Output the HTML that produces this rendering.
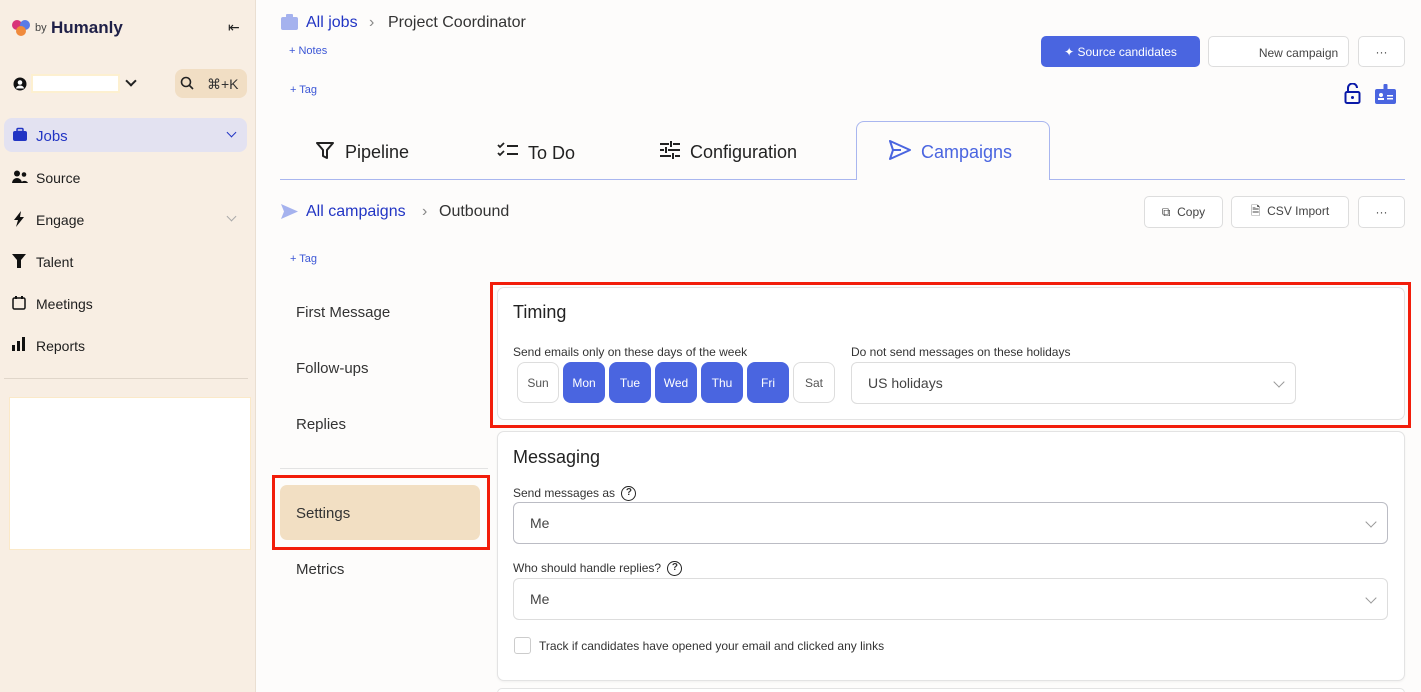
<!DOCTYPE html>
<html><head><meta charset="utf-8"><style>
*{box-sizing:border-box;margin:0;padding:0}
html,body{width:1421px;height:692px;overflow:hidden}
body{background:#fdfcfb;font-family:"Liberation Sans",sans-serif;color:#222;position:relative}
.a{position:absolute;white-space:nowrap}
.side{position:absolute;left:0;top:0;width:256px;height:692px;background:#f8eee3;border-right:1px solid #eadfd2}
.nav{position:absolute;left:36px;font-size:14px;color:#1e1e1e}
.btn{position:absolute;border:1px solid #ddd;border-radius:5px;background:#fff;font-size:12px;color:#444;display:flex;align-items:center;justify-content:center}
.blue{color:#2235c4}
.day{position:absolute;top:362px;width:42px;height:41px;border-radius:8px;font-size:12px;display:flex;align-items:center;justify-content:center}
.on{background:#4a65e0;color:#fff}
.off{background:#fff;border:1px solid #ddd;color:#555}
.sel{position:absolute;background:#fff;border:1px solid #ddd;border-radius:6px;font-size:14px;color:#444;padding-left:16px;display:flex;align-items:center}
.chev{position:absolute;right:12px;top:50%;margin-top:-5px;width:8px;height:8px;border-right:1.3px solid #999;border-bottom:1.3px solid #999;transform:rotate(45deg)}
.menu{position:absolute;left:296px;font-size:15px;color:#333}
</style></head><body>
<div class="side">
  <svg class="a" style="left:11px;top:19px" width="20" height="18"><circle cx="6" cy="6" r="5" fill="#d8347a"/><circle cx="14" cy="6" r="5" fill="#5b7be8"/><circle cx="10" cy="12" r="5" fill="#f08a3c"/></svg>
  <div class="a" style="left:35px;top:22px;font-size:11px;color:#444">by</div>
  <div class="a" style="left:51px;top:18px;font-size:17px;font-weight:bold;color:#1f2048">Humanly</div>
  <div class="a" style="left:228px;top:19px;font-size:14px;color:#222">⇤</div>
  <svg class="a" style="left:13px;top:77px" width="14" height="14"><circle cx="7" cy="7" r="6.5" fill="#111"/><circle cx="7" cy="5.5" r="2.3" fill="#fff"/><path d="M3 11.5a4 3 0 0 1 8 0" fill="#fff"/></svg>
  <div class="a" style="left:31px;top:74px;width:89px;height:19px;background:#fff;border:2px solid #fdf0d0"></div>
  <div class="a" style="left:127px;top:77px;width:8px;height:8px;border-right:2px solid #222;border-bottom:2px solid #222;transform:rotate(45deg)"></div>
  <div class="a" style="left:175px;top:69px;width:72px;height:29px;background:#f1dec4;border-radius:8px"></div>
  <svg class="a" style="left:180px;top:76px" width="14" height="14"><circle cx="6" cy="6" r="4.5" fill="none" stroke="#222" stroke-width="1.6"/><path d="M9.5 9.5L13 13" stroke="#222" stroke-width="1.6"/></svg>
  <div class="a" style="left:207px;top:76px;font-size:14px;color:#333">⌘+K</div>
  <div class="a" style="left:4px;top:118px;width:243px;height:34px;background:#e3e2f1;border-radius:8px"></div>
  <svg class="a" style="left:12px;top:127px" width="16" height="16"><rect x="1" y="4" width="14" height="10" rx="2" fill="#2235c4"/><rect x="5" y="1.5" width="6" height="3" rx="1" fill="none" stroke="#2235c4" stroke-width="1.5"/></svg>
  <div class="nav blue" style="top:128px;font-size:15px">Jobs</div>
  <div class="a" style="left:228px;top:129px;width:7px;height:7px;border-right:1.3px solid #2235c4;border-bottom:1.3px solid #2235c4;transform:rotate(45deg)"></div>
  <svg class="a" style="left:12px;top:170px" width="16" height="14"><circle cx="5" cy="3.5" r="3" fill="#111"/><circle cx="12" cy="4.5" r="2.3" fill="#111"/><path d="M0 13a5 5 0 0 1 10 0z M9 13a4 4 0 0 1 7 0z" fill="#111"/></svg><div class="nav" style="top:170px">Source</div>
  <svg class="a" style="left:13px;top:211px" width="12" height="16"><path d="M8 0L1 9h4l-2 7 8-10H7z" fill="#111"/></svg><div class="nav" style="top:212px">Engage</div>
  <div class="a" style="left:228px;top:213px;width:7px;height:7px;border-right:1px solid #aaa;border-bottom:1px solid #aaa;transform:rotate(45deg)"></div>
  <svg class="a" style="left:12px;top:254px" width="14" height="14"><path d="M0 0h14l-5 6v8h-4v-8z" fill="#111"/></svg><div class="nav" style="top:254px">Talent</div>
  <svg class="a" style="left:12px;top:296px" width="14" height="14"><rect x="1" y="2" width="12" height="11" rx="1.5" fill="none" stroke="#111" stroke-width="1.5"/><rect x="3" y="0" width="2" height="3" fill="#111"/><rect x="9" y="0" width="2" height="3" fill="#111"/></svg><div class="nav" style="top:296px">Meetings</div>
  <svg class="a" style="left:12px;top:337px" width="14" height="14"><rect x="0" y="8" width="3" height="6" fill="#111"/><rect x="5" y="4" width="3" height="10" fill="#111"/><rect x="10" y="0" width="3" height="14" fill="#111"/></svg><div class="nav" style="top:338px">Reports</div>
  <div class="a" style="left:4px;top:378px;width:244px;height:1px;background:#e0d6ca"></div>
  <div class="a" style="left:9px;top:397px;width:242px;height:153px;background:#fff;border:1px solid #fbe9c8"></div>
</div>

<svg class="a" style="left:281px;top:14px" width="17" height="16"><rect x="0" y="3" width="17" height="13" rx="2" fill="#a5b2ee"/><rect x="5" y="0" width="7" height="4" rx="1" fill="#a5b2ee"/></svg>
<div class="a blue" style="left:306px;top:14px;font-size:16px">All jobs</div>
<div class="a" style="left:369px;top:14px;font-size:16px;color:#888">›</div>
<div class="a" style="left:388px;top:14px;font-size:16px;color:#333">Project Coordinator</div>
<div class="a" style="left:289px;top:45px;font-size:11px;color:#3c57d6">+ Notes</div>
<div class="a" style="left:290px;top:84px;font-size:11px;color:#3c57d6">+ Tag</div>

<div class="btn" style="left:1041px;top:36px;width:159px;height:31px;background:#4a65e0;border-color:#4a65e0;color:#fff">✦ Source candidates</div>
<div class="btn" style="left:1208px;top:36px;width:141px;height:31px;padding-left:40px;padding-top:3px">New campaign</div>
<div class="btn" style="left:1358px;top:36px;width:47px;height:31px">···</div>
<svg class="a" style="left:1344px;top:83px" width="18" height="22"><path d="M4 9V5a4.5 4.5 0 0 1 9 0" fill="none" stroke="#0a1aa8" stroke-width="2"/><rect x="1.5" y="9" width="14" height="11" rx="1.5" fill="none" stroke="#0a1aa8" stroke-width="2"/><circle cx="8.5" cy="14.5" r="1.5" fill="#0a1aa8"/></svg>
<svg class="a" style="left:1375px;top:83px" width="21" height="22"><rect x="0" y="6" width="21" height="15" rx="2" fill="#4a65e0"/><rect x="8.5" y="1" width="4" height="8" rx="1" fill="#4a65e0"/><circle cx="6" cy="12" r="2" fill="#fff"/><rect x="3" y="15" width="6" height="2" fill="#fff"/><rect x="12" y="12" width="6" height="1.5" fill="#fff"/><rect x="12" y="15" width="6" height="1.5" fill="#fff"/></svg>

<div class="a" style="left:280px;top:179px;width:1125px;height:1px;background:#a9b6ef"></div>
<div class="a" style="left:856px;top:121px;width:194px;height:59px;border:1px solid #a9b6ef;border-bottom:none;border-radius:8px 8px 0 0;background:#fdfcfb"></div>
<svg class="a" style="left:316px;top:142px" width="18" height="18"><path d="M1 1h16l-6 7v8l-4-2v-6z" fill="none" stroke="#222" stroke-width="2" stroke-linejoin="round"/></svg>
<div class="a" style="left:345px;top:142px;font-size:18px;color:#222">Pipeline</div>
<svg class="a" style="left:497px;top:142px" width="22" height="16"><path d="M1 3l2 2 4-4M1 11l2 2 4-4" fill="none" stroke="#222" stroke-width="1.8"/><path d="M10 4h11M10 12h11" stroke="#222" stroke-width="2"/></svg>
<div class="a" style="left:528px;top:143px;font-size:18px;color:#222">To Do</div>
<svg class="a" style="left:660px;top:141px" width="20" height="18"><path d="M0 3h9M13 3h7M0 9h4M8 9h12M0 15h11M15 15h5M11 0v6M6 6v6M13 12v6" stroke="#222" stroke-width="2"/></svg>
<div class="a" style="left:690px;top:142px;font-size:18px;color:#222">Configuration</div>
<svg class="a" style="left:889px;top:140px" width="22" height="20"><path d="M1 1l20 9-20 9 3-9z M4 10h8" fill="none" stroke="#4a65e0" stroke-width="2" stroke-linejoin="round"/></svg>
<div class="a" style="left:921px;top:142px;font-size:18px;color:#4a65e0">Campaigns</div>

<svg class="a" style="left:281px;top:204px" width="17" height="15"><path d="M0 0l17 7.5L0 15l3-7.5z" fill="#a5b2ee"/></svg>
<div class="a blue" style="left:306px;top:203px;font-size:16px">All campaigns</div>
<div class="a" style="left:422px;top:203px;font-size:16px;color:#888">›</div>
<div class="a" style="left:439px;top:203px;font-size:16px;color:#333">Outbound</div>
<div class="btn" style="left:1144px;top:196px;width:79px;height:32px">⧉&nbsp; Copy</div>
<div class="btn" style="left:1231px;top:196px;width:118px;height:32px">🗎︎&nbsp; CSV Import</div>
<div class="btn" style="left:1358px;top:196px;width:47px;height:32px">···</div>
<div class="a" style="left:290px;top:253px;font-size:11px;color:#3c57d6">+ Tag</div>

<div class="menu" style="top:304px">First Message</div>
<div class="menu" style="top:360px">Follow-ups</div>
<div class="menu" style="top:416px">Replies</div>
<div class="a" style="left:280px;top:468px;width:208px;height:1px;background:#e3e3e3"></div>
<div class="a" style="left:272px;top:475px;width:218px;height:75px;border:3px solid #f21d0a"></div>
<div class="a" style="left:280px;top:485px;width:200px;height:55px;background:#f2dfc3;border-radius:7px"></div>
<div class="menu" style="top:505px">Settings</div>
<div class="menu" style="top:561px">Metrics</div>

<div class="a" style="left:497px;top:287px;width:908px;height:133px;background:#fff;border:1px solid #e3e3e3;border-radius:7px"></div>
<div class="a" style="left:490px;top:282px;width:921px;height:146px;border:3px solid #f21d0a"></div>
<div class="a" style="left:513px;top:302px;font-size:18px;color:#222">Timing</div>
<div class="a" style="left:513px;top:345px;font-size:12px;color:#333">Send emails only on these days of the week</div>
<div class="a" style="left:851px;top:345px;font-size:12px;color:#333">Do not send messages on these holidays</div>
<div class="day off" style="left:517px">Sun</div>
<div class="day on" style="left:563px">Mon</div>
<div class="day on" style="left:609px">Tue</div>
<div class="day on" style="left:655px">Wed</div>
<div class="day on" style="left:701px">Thu</div>
<div class="day on" style="left:747px">Fri</div>
<div class="day off" style="left:793px">Sat</div>
<div class="sel" style="left:851px;top:362px;width:445px;height:42px">US holidays<span class="chev"></span></div>

<div class="a" style="left:497px;top:431px;width:908px;height:250px;background:#fff;border:1px solid #e3e3e3;border-radius:7px;box-shadow:0 1px 2px rgba(0,0,0,.05)"></div>
<div class="a" style="left:513px;top:447px;font-size:18px;color:#222">Messaging</div>
<div class="a" style="left:513px;top:486px;font-size:12px;color:#333">Send messages as <span style="display:inline-block;width:15px;height:15px;border:1.5px solid #222;border-radius:50%;font-size:10px;text-align:center;line-height:12px;margin-left:3px;font-weight:bold;vertical-align:middle">?</span></div>
<div class="sel" style="left:513px;top:502px;width:875px;height:42px;border-color:#bbbcc4">Me<span class="chev"></span></div>
<div class="a" style="left:513px;top:561px;font-size:12px;color:#333">Who should handle replies? <span style="display:inline-block;width:15px;height:15px;border:1.5px solid #222;border-radius:50%;font-size:10px;text-align:center;line-height:12px;margin-left:3px;font-weight:bold;vertical-align:middle">?</span></div>
<div class="sel" style="left:513px;top:578px;width:875px;height:42px">Me<span class="chev"></span></div>
<div class="a" style="left:514px;top:637px;width:17px;height:17px;border:1px solid #ccc;border-radius:3px;background:#fff"></div>
<div class="a" style="left:539px;top:639px;font-size:12px;color:#333">Track if candidates have opened your email and clicked any links</div>
<div class="a" style="left:497px;top:688px;width:908px;height:10px;background:#fff;border:1px solid #e3e3e3;border-radius:7px"></div>
</body></html>
